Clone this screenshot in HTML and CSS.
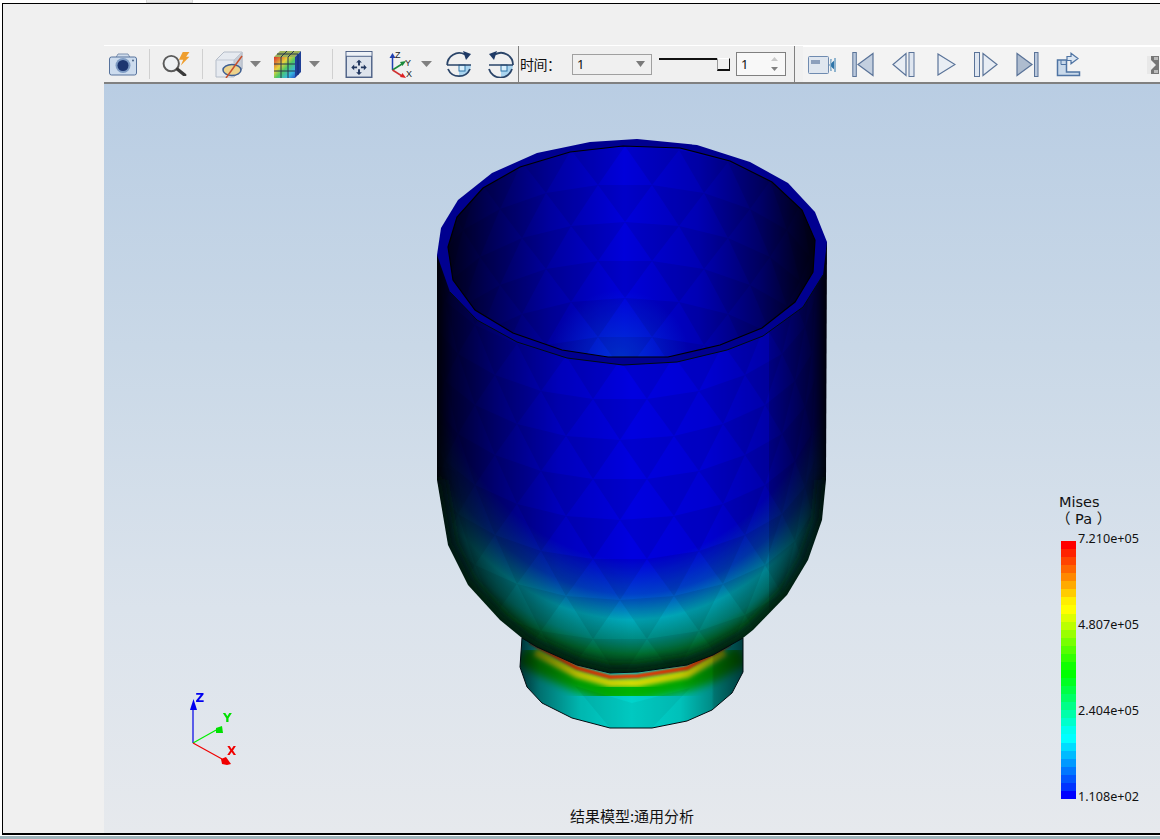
FILE: index.html
```html
<!DOCTYPE html>
<html lang="zh">
<head>
<meta charset="utf-8">
<title>结果模型</title>
<link rel="stylesheet" href="styles.css">
</head>
<body>
<div class="tab-stub"></div>
<main class="frame">
  <div class="toolbar">
    <svg class="ic w28 m5" viewBox="0 0 28 22"><path d="M7 4l2-3.500h10l2 3.500" fill="#cfdcec" stroke="#8093b0"/><rect x=".5" y="3.500" width="27" height="18" rx="2" fill="#cddcee" stroke="#56729c"/><circle cx="14" cy="12" r="7.500" fill="#7f9cc4"/><circle cx="14" cy="12" r="5.500" fill="#1c3570"/><circle cx="24" cy="7" r="1" fill="#4a6488"/></svg>
    <span class="sep m12"></span>
    <svg class="ic w29 m12" viewBox="0 0 29 25"><path d="M21 0h7l-3.500 5H28L19 14l2.500-6H17z" fill="#ee9e2e"/><circle cx="9" cy="12" r="8" fill="#eef1f4" stroke="#5a5a5a" stroke-width="2"/><path d="M15.500 18l7.500 6" stroke="#3a3a3a" stroke-width="3.500" stroke-linecap="round"/></svg>
    <span class="sep m11"></span>
    <svg class="ic w28 m12" viewBox="0 0 28 27"><path d="M1 9L9 1h18v17l-8 8H1z" fill="#e6eaf0" stroke="#b4bcc8"/><path d="M19 9v17l8-8V1z" fill="#c6ccd6" stroke="#b4bcc8"/><path d="M1 9h18L27 1" fill="none" stroke="#c0c7d2"/><ellipse cx="19" cy="22" rx="9" ry="5.500" transform="translate(-2 -3)" fill="#edd28a" stroke="#3f5f92" stroke-width="1.500"/><path d="M27 5L11 27" stroke="#c8502c" stroke-width="1.500"/></svg>
    <svg class="ic w11 m7" viewBox="0 0 11 6"><path d="M0 0h11L5.500 6z" fill="#808080"/></svg>
    <svg class="ic w27 m13" viewBox="0 0 27 27"><path d="M6 0h21l-6 6H0z" fill="#9db15a"/><path d="M21 6l6-6v21l-6 6z" fill="#1f3f96"/><rect width="21" height="21" y="6" fill="url(#cubeFace)"/><path d="M7 6v21M14 6v21M0 13h21M0 20h21M7 6l6-6M14 6l6-6M3 3h21" stroke="#26364f" stroke-width="1" fill="none"/><path d="M24 3v21" stroke="#102a70"/></svg>
    <svg class="ic w11 m8" viewBox="0 0 11 6"><path d="M0 0h11L5.500 6z" fill="#808080"/></svg>
    <span class="sep m12"></span>
    <svg class="ic w28 m12" viewBox="0 0 28 28"><rect x=".75" y=".75" width="26.500" height="26.500" fill="#dde3ec" stroke="#4f6287" stroke-width="1.500"/><path d="M1 1h26v4H1z" fill="#eef2f7"/><path d="M1 5.500h26" stroke="#4f6287"/><path d="M14 9l-3 3h2v3h2v-3h2zM14 25l-3-3h2v-3h2v3h2zM6 17l3-3v2h3v2H9v2zM22 17l-3-3v2h-3v2h3v2z" fill="#22375f"/></svg>
    <svg class="ic w25 m16" viewBox="0 0 25 29"><path d="M3.500 20V7" stroke="#1f3fb0" stroke-width="1.500"/><path d="M3.500 3l-3 5h6z" fill="#1f3fb0"/><path d="M3.500 20L13 14" stroke="#1a8a3a" stroke-width="1.500"/><path d="M17 11l-6 1 2.500 4z" fill="#1a8a3a"/><path d="M3.500 20L13 26" stroke="#d03030" stroke-width="1.500"/><path d="M17 28l-6-1 2.500-4z" fill="#e02020"/><text x="6" y="8" class="ax-t">Z</text><text x="16" y="16" class="ax-t">Y</text><text x="17" y="27" class="ax-t">X</text></svg>
    <svg class="ic w11 m7" viewBox="0 0 11 6"><path d="M0 0h11L5.500 6z" fill="#808080"/></svg>
    <svg class="ic w26 m14" viewBox="0 0 26 27"><path d="M13 14h12a12 12 0 0 1-12 12z" fill="#a9d4ef"/><rect x="13" y="14" width="6" height="6" fill="#d8eefa" stroke="#2f74a8"/><path d="M1 14h24" stroke="#2a4468" stroke-width="1.500"/><path d="M24 18a12 12 0 0 1-22 0M1.200 14A12 12 0 0 1 19 3.500" fill="none" stroke="#2a4468" stroke-width="1.800"/><path d="M17 0l8 3-5 6z" fill="#1f3a66"/></svg>
    <svg class="ic w27 m15" viewBox="0 0 27 27"><path d="M14 14h12a12 12 0 0 1-12 12z" fill="#a9d4ef"/><rect x="14" y="14" width="6" height="6" fill="#d8eefa" stroke="#2f74a8"/><path d="M2 14h24" stroke="#2a4468" stroke-width="1.500"/><path d="M2 18a12 12 0 0 0 23 0M26 14A12 12 0 0 0 8 3.500" fill="none" stroke="#2a4468" stroke-width="1.800"/><path d="M10 0L2 3l5 6z" fill="#1f3a66"/></svg>
    <span class="sep sep-dark m4"></span>
    <span class="label">时间：</span>
    <div class="combo"><span>1</span><svg class="drop" viewBox="0 0 9 6"><path d="M0 0h9L4.500 6z" fill="#7a7a7a"/></svg></div>
    <div class="slider"><span class="rail"></span><span class="thumb"></span></div>
    <div class="spin"><span>1</span><svg class="spin-arrows" viewBox="0 0 7 14"><path d="M3.500 0L7 4H0z" fill="#c8c8c8"/><path d="M3.500 14L7 10H0z" fill="#808080"/></svg></div>
    <span class="sep sep-dark m8"></span>
    <div class="toolbar2">
      <svg class="ic w29 m5" viewBox="0 0 29 18"><rect x=".5" y=".5" width="20" height="17" rx="1" fill="#dfe6ef" stroke="#6f8bb0"/><rect x="3" y="4" width="9" height="4" fill="#8da0bc"/><path d="M21 9l7-6v12z" fill="#2f74a8"/><path d="M22 3h2l-1 6 1 6h-2zM26 2h2v14h-2z" fill="#8fb4cf"/></svg>
      <svg class="ic w22 m15" viewBox="0 0 22 25"><path d="M21 1.500v22L6 12.500z" fill="#c3cfdf" stroke="#5a7398" stroke-width="1.200"/><rect x=".8" y=".5" width="3.500" height="24" fill="#bac8dc" stroke="#5a7398"/></svg>
      <svg class="ic w23 m18" viewBox="0 0 23 25"><path d="M14 1.500v22L1 12.500z" fill="#e8edf4" stroke="#5a7398" stroke-width="1.200"/><rect x="17" y=".5" width="5" height="24" fill="#dfe6f0" stroke="#5a7398"/></svg>
      <svg class="ic w19 m22" viewBox="0 0 19 23"><path d="M1 1v21l17-10.500z" fill="#e8edf4" stroke="#5a7398" stroke-width="1.200"/></svg>
      <svg class="ic w24 m18" viewBox="0 0 24 25"><rect x=".5" y=".5" width="5" height="24" fill="#dfe6f0" stroke="#5a7398"/><path d="M9 1.500v22l14-11z" fill="#e8edf4" stroke="#5a7398" stroke-width="1.200"/></svg>
      <svg class="ic w23 m18" viewBox="0 0 23 25"><path d="M1 1.500v22l15-11z" fill="#aebccf" stroke="#5a7398" stroke-width="1.200"/><rect x="18.500" y=".5" width="3.500" height="24" fill="#bac8dc" stroke="#5a7398"/></svg>
      <svg class="ic w25 m17" viewBox="0 0 25 24"><path d="M1.500 7.500h9v12h13v3.500H1.500z" fill="#c9d9ea" stroke="#4f74a3" stroke-width="1.500"/><path d="M5 7.500V12h5" fill="none" stroke="#4f74a3"/><path d="M11 4h4V.8l7 5.200-7 5.200V8h-4z" fill="#dbe6f2" stroke="#4f74a3" stroke-width="1.200"/></svg>
      <svg class="grip" viewBox="0 0 12 18"><rect width="12" height="18" fill="#777"/><path d="M0 0h4v18H0z" fill="#e8e8e8"/><path d="M4 4l5 5-5 5z" fill="#eee"/><path d="M7 1h4v3H7zM7 14h4v3H7z" fill="#bbb"/></svg>
    </div>
  </div>

  <section class="viewport">
    <svg class="scene" viewBox="104 84 1056 750">
      <defs>
        <linearGradient id="cubeFace" x1="0" y1="0" x2="1" y2="1"><stop offset="0" stop-color="#d8302c"/><stop offset=".35" stop-color="#e6d23c"/><stop offset=".55" stop-color="#4fc864"/><stop offset=".8" stop-color="#35b8e0"/><stop offset="1" stop-color="#2a58c8"/></linearGradient>
        <radialGradient id="stress" gradientUnits="userSpaceOnUse" cx="0" cy="0" r="1" gradientTransform="translate(632 250) scale(310 430)">
          <stop offset="0" stop-color="#0000e0"/><stop offset=".72" stop-color="#0000e0"/><stop offset=".8" stop-color="#0040cc"/><stop offset=".86" stop-color="#00aabc"/><stop offset=".907" stop-color="#008a80"/><stop offset=".94" stop-color="#007030"/><stop offset=".98" stop-color="#003c14"/><stop offset="1" stop-color="#002a10"/>
        </radialGradient>
        <linearGradient id="shade" gradientUnits="userSpaceOnUse" x1="437" y1="0" x2="827" y2="0">
          <stop offset="0" stop-color="#080808"/><stop offset=".04" stop-color="#383838"/><stop offset=".15" stop-color="#808080"/><stop offset=".31" stop-color="#d4d4d4"/><stop offset=".5" stop-color="#fff"/><stop offset=".69" stop-color="#eee"/><stop offset=".85" stop-color="#c0c0c0"/><stop offset=".851" stop-color="#a0a0a0"/><stop offset=".96" stop-color="#484848"/><stop offset="1" stop-color="#0a0a0a"/>
        </linearGradient>
        <linearGradient id="inner" gradientUnits="userSpaceOnUse" x1="448" y1="0" x2="815" y2="0">
          <stop offset="0" stop-color="#00001c"/><stop offset=".1" stop-color="#000050"/><stop offset=".28" stop-color="#0000a0"/><stop offset=".48" stop-color="#0000da"/><stop offset=".68" stop-color="#0000b4"/><stop offset=".85" stop-color="#000068"/><stop offset=".95" stop-color="#00002a"/><stop offset="1" stop-color="#000012"/>
        </linearGradient>
        <radialGradient id="floorGlow" gradientUnits="userSpaceOnUse" cx="620" cy="360" r="70"><stop offset="0" stop-color="#0040d8" stop-opacity=".8"/><stop offset="1" stop-color="#0040d8" stop-opacity="0"/></radialGradient>
        <linearGradient id="footShade" gradientUnits="userSpaceOnUse" x1="520" y1="0" x2="743" y2="0">
          <stop offset="0" stop-color="#2c3c44"/><stop offset=".09" stop-color="#76888c"/><stop offset=".27" stop-color="#dcdcdc"/><stop offset=".5" stop-color="#fff"/><stop offset=".72" stop-color="#e8e8e8"/><stop offset=".86" stop-color="#a0a8a8"/><stop offset=".87" stop-color="#808c8c"/><stop offset="1" stop-color="#34474c"/>
        </linearGradient>
        <clipPath id="bodyClip"><path d="M437 255L437 480 448 545 468 585 500 620 522 638 537 647 577 665 610 673 638 672 687 665 713 655 743 638 753 630 787 595 808 560 822 520 826 480 827 242Z"/></clipPath>
        <clipPath id="footClip"><path d="M522 636L520 667 527 687 542 703 572 718 610 728 652 728 687 721 712 710 732 693 743 672 743 636Z"/></clipPath>
        <clipPath id="innerClip"><path d="M448 247L457 217 483 188 520 167 570 152 623 146 680 148 730 161 772 182 802 210 815 240 813 272 795 302 762 328 720 345 668 357 608 357 562 350 513 333 475 310 453 280Z"/></clipPath>
        <filter id="b1"><feGaussianBlur stdDeviation="1"/></filter>
        <filter id="b2"><feGaussianBlur stdDeviation="2"/></filter>
        <filter id="b4"><feGaussianBlur stdDeviation="4"/></filter>
        <filter id="b6"><feGaussianBlur stdDeviation="6"/></filter>
        <!-- two rows of the triangle mesh, repeated down the wall -->
        <path id="meshOut" d="M632 360L578 356 605 399ZM578 356L529 344 553 391ZM529 344L487 325 507 375ZM487 325L457 301 470 354ZM457 301L440 273 447 327ZM605 399L553 391 578 436ZM553 391L507 375 529 424ZM507 375L470 354 487 405ZM470 354L447 327 457 381ZM447 327L437 299 440 353ZM659 399L632 399 632 440 605 399 632 399Z"/>
        <g id="meshOutRows">
          <use href="#meshOut" y="-80"/>
          <use href="#meshOut"/>
          <use href="#meshOut" y="80"/>
          <use href="#meshOut" y="160"/>
          <use href="#meshOut" y="240"/>
          <use href="#meshOut" y="320"/>
        </g>
        <path id="meshIn" d="M625 146L571 150 598 185ZM571 150L522 162 546 193ZM522 162L480 181 500 209ZM480 181L450 205 463 230ZM450 205L433 233 440 257ZM598 185L546 193 571 226ZM546 193L500 209 522 238ZM500 209L463 230 480 257ZM463 230L440 257 450 281ZM625 185L598 185 625 222Z"/>
        <g id="meshInRows">
          <use href="#meshIn"/>
          <use href="#meshIn" y="76"/>
          <use href="#meshIn" y="152"/>
        </g>
      </defs>

      <!-- foot with the hot band under the junction -->
      <g clip-path="url(#footClip)" class="iso">
        <rect x="515" y="630" width="235" height="100" fill="#00d4cc"/>
        <polyline class="band" points="522,654 537,663 577,681 610,692 638,691 687,681 713,671 743,654" stroke="#00b400" stroke-width="21" filter="url(#b4)"/>
        <polyline class="band" points="535,652 577,674 610,683 638,683 687,674 725,652" stroke="#dcdc00" stroke-width="8" filter="url(#b2)"/>
        <polyline class="band" points="530,642 577,668 610,677 638,676 687,668 730,644" stroke="#e83800" stroke-width="4" filter="url(#b1)"/>
        <path d="M632 703L610 728 652 728ZM632 703L575 686 610 728ZM632 703L690 688 652 728Z" fill="#000" opacity=".05"/>
        <rect class="mul" x="515" y="630" width="235" height="100" fill="url(#footShade)"/>
      </g>
      <polyline class="edge" points="522,638 520,667 527,687 542,703 572,718 610,728 652,728 687,721 712,710 732,693 743,672 743,638"/>

      <!-- outer body -->
      <g clip-path="url(#bodyClip)" class="iso">
        <rect x="430" y="240" width="405" height="440" fill="url(#stress)"/>
        <g fill="#000" opacity=".08" transform="translate(-12 0)">
          <use href="#meshOutRows"/>
          <use href="#meshOutRows" transform="translate(1264 0) scale(-1 1)"/>
        </g>
        <rect class="mul" x="430" y="240" width="405" height="440" fill="url(#shade)"/>
        <path d="M437 480L448 545 468 585 500 620 522 638 537 647 577 665 610 673 638 672 687 665 713 655 743 638 753 630 787 595 808 560 822 520 826 480" fill="none" stroke="#001410" stroke-width="16" opacity=".75" filter="url(#b6)"/>
      </g>
      <polyline class="edge" points="522,638 537,647 577,665 610,673 638,672 687,665 713,655 743,638"/>

      <!-- rim ring and the inner wall -->
      <polygon points="437,255 441,228 458,200 492,173 537,153 590,142 637,139 697,145 750,162 788,183 815,212 827,242 823,275 803,307 763,336 727,350 677,362 623,365 567,358 517,342 477,320 450,292" fill="#000090"/>
      <polyline class="edge" points="450,292 477,320 517,342 567,358 623,365 677,362 727,350 763,336 803,307 823,275"/>
      <g clip-path="url(#innerClip)">
        <rect x="445" y="140" width="375" height="225" fill="url(#inner)"/>
        <rect x="445" y="140" width="375" height="225" fill="url(#floorGlow)"/>
        <g fill="#000" opacity=".08">
          <use href="#meshInRows"/>
          <use href="#meshInRows" transform="translate(1250 0) scale(-1 1)"/>
        </g>
      </g>
      <polygon class="rim-in" points="448,247 457,217 483,188 520,167 570,152 623,146 680,148 730,161 772,182 802,210 815,240 813,272 795,302 762,328 720,345 668,357 608,357 562,350 513,333 475,310 453,280"/>

      <!-- axis triad -->
      <path class="line" d="M193 743V708" stroke="#0000e6"/>
      <path d="M193.500 699L197 710H190z" fill="#0000f0"/>
      <path class="line" d="M193 743L218 729" stroke="#00ee00"/>
      <path d="M222 726L223 733 216 733 216 728z" fill="#00e000"/>
      <path class="line" d="M193 743L222 759" stroke="#f00000"/>
      <path d="M227 765L222 764 221 759 226 757 231 764z" fill="#f00000"/>
      <text x="195.500" y="702" class="ax ax-z">Z</text>
      <text x="223" y="722" class="ax ax-y">Y</text>
      <text x="227" y="755" class="ax ax-x">X</text>
    </svg>

    <div class="legend">
      <div class="legend-title">Mises</div>
      <div class="legend-title unit">（ Pa ）</div>
      <div class="legend-body">
        <div class="legend-bar"></div>
        <div class="legend-ticks"><span>7.210e+05</span><span>4.807e+05</span><span>2.404e+05</span><span>1.108e+02</span></div>
      </div>
    </div>
    <div class="caption">结果模型:通用分析</div>
  </section>
</main>
</body>
</html>
```
FILE: styles.css
```css
* { box-sizing: border-box; }
html, body { margin: 0; height: 100%; }
body {
  font-family: "Noto Sans", "Noto Sans CJK SC", sans-serif;
  color: #111;
  overflow: hidden;
  position: relative;
  height: 839px;
  padding: 3px 0 3px 2px;
  background: linear-gradient(#fff 836px, #9fb4bb 836px);
}
.tab-stub {
  position: absolute;
  left: 146px; top: 0;
  width: 47px; height: 3px;
  background: #ececec;
  border: 1px solid #d8d8d8;
  border-top: 0;
}
.frame {
  height: 832px;
  background: #f0f0f0;
  border-top: 1px solid #000;
  border-left: 1px solid #000;
  border-bottom: 2px solid #000;
  padding: 41px 0 0 101px;
  display: flex;
  flex-direction: column;
}
.toolbar {
  height: 39px;
  flex: none;
  display: flex;
  align-items: center;
  background: #f0f0f0;
  border-top: 1px solid #fff;
  border-bottom: 2px solid #808080;
}
.ic { flex: none; display: block; }
.w11 { width: 11px; height: 6px; }
.w19 { width: 19px; height: 23px; }
.w22 { width: 22px; height: 25px; }
.w23 { width: 23px; height: 25px; }
.w24 { width: 24px; height: 25px; }
.w25 { width: 25px; height: 29px; }
.w26 { width: 26px; height: 27px; }
.w27 { width: 27px; height: 27px; }
.w28 { width: 28px; height: 27px; }
.w29 { width: 29px; height: 24px; }
.m4 { margin-left: 4px; }
.m5 { margin-left: 5px; }
.m7 { margin-left: 7px; }
.m8 { margin-left: 8px; }
.m11 { margin-left: 11px; }
.m12 { margin-left: 12px; }
.m13 { margin-left: 13px; }
.m14 { margin-left: 14px; }
.m15 { margin-left: 15px; }
.m16 { margin-left: 16px; }
.m17 { margin-left: 17px; }
.m18 { margin-left: 18px; }
.m22 { margin-left: 22px; }
.sep {
  flex: none;
  width: 1px;
  height: 30px;
  background: #d0d0d0;
}
.sep-dark {
  height: 37px;
  background: #808080;
}
.label {
  flex: none;
  width: 52px;
  margin-left: 1px;
  font: 14px "Noto Sans CJK SC", sans-serif;
  letter-spacing: -.5px;
  white-space: nowrap;
}
.combo {
  flex: none;
  width: 80px;
  height: 21px;
  border: 1px solid #a0a0a0;
  background: #f0f0f0;
  display: flex;
  align-items: center;
  justify-content: space-between;
  padding: 0 6px 0 4px;
  font-size: 13px;
}
.drop { width: 9px; height: 6px; }
.slider {
  flex: none;
  width: 71px;
  height: 13px;
  margin-left: 7px;
  position: relative;
}
.rail {
  position: absolute;
  left: 0; top: 0;
  width: 58px; height: 2px;
  background: #111;
}
.thumb {
  position: absolute;
  right: 0; top: 0;
  width: 13px; height: 13px;
  background: #f0f0f0;
  border-right: 1.500px solid #111;
  border-bottom: 2px solid #111;
  border-left: 1px solid #999;
  border-top: 1px solid #fff;
}
.spin {
  flex: none;
  width: 50px;
  height: 24px;
  margin-left: 6px;
  border: 1px solid #808080;
  background: #f8f8f8;
  display: flex;
  align-items: center;
  justify-content: space-between;
  padding: 0 7px 0 4px;
  font-size: 13px;
}
.spin-arrows { width: 7px; height: 14px; }
.toolbar2 {
  flex: none;
  width: 357px;
  height: 36px;
  margin-left: 8px;
  align-self: flex-start;
  background: #f3f3f3;
  border-top: 1px solid #fff;
  display: flex;
  align-items: center;
  position: relative;
}
.toolbar2 .w29 { height: 18px; }
.grip {
  position: absolute;
  right: 1px; top: 9px;
  width: 12px; height: 18px;
}
.ax-t { font: 9px "Liberation Sans", sans-serif; fill: #222; }

.viewport {
  flex: 1;
  position: relative;
  overflow: hidden;
  background: linear-gradient(#b9cde3 0, #c9d8e7 35%, #dbe3ec 70%, #e6e9ed 100%);
}
.scene {
  position: absolute;
  inset: 0;
  width: 1056px;
  height: 750px;
}
.iso { isolation: isolate; }
.mul { mix-blend-mode: multiply; }
.band { fill: none; }
.edge { fill: none; stroke: #000c10; stroke-width: 1; }
.rim-in { fill: none; stroke: #000; stroke-width: 1.200; }
.line { fill: none; stroke-width: 1.200; }
.ax { font: bold 12px "DejaVu Sans", sans-serif; }
.ax-z { fill: #0000f0; }
.ax-y { fill: #00e000; }
.ax-x { fill: #f00000; }

.legend {
  position: absolute;
  left: 955px;
  top: 410px;
  width: 90px;
}
.legend-title {
  font: 14.500px/17px "DejaVu Sans", "Noto Sans CJK SC", sans-serif;
  color: #111;
  white-space: nowrap;
}
.unit { margin-left: -3px; }
.legend-body {
  display: flex;
  margin-top: 13px;
  margin-left: 2px;
}
.legend-bar {
  width: 15px;
  height: 258px;
  flex: none;
  background: linear-gradient(
    #f00 0 3.125%, #f20 0 6.25%, #f40 0 9.375%, #f60 0 12.5%, #f80 0 15.625%, #fa0 0 18.75%, #fc0 0 21.875%, #fe0 0 25%,
    #ff0 0 28.125%, #df0 0 31.25%, #bf0 0 34.375%, #9f0 0 37.5%, #7f0 0 40.625%, #5f0 0 43.75%, #3f0 0 46.875%, #1f0 0 50%,
    #0f0 0 53.125%, #0f2 0 56.25%, #0f4 0 59.375%, #0f6 0 62.5%, #0f8 0 65.625%, #0fa 0 68.75%, #0fc 0 71.875%, #0fe 0 75%,
    #0ff 0 78.125%, #0df 0 81.25%, #0bf 0 84.375%, #09f 0 87.5%, #07f 0 90.625%, #05f 0 93.75%, #03f 0 96.875%, #00f 0 100%
  );
}
.legend-ticks {
  height: 274px;
  margin: -10px 0 0 2px;
  display: flex;
  flex-direction: column;
  justify-content: space-between;
  font-size: 12.600px;
  line-height: 16px;
  color: #111;
  white-space: nowrap;
}
.caption {
  position: absolute;
  left: 0; right: 0;
  bottom: 8px;
  text-align: center;
  font: 15px/18px "Noto Sans CJK SC", sans-serif;
  color: #111;
}
```
